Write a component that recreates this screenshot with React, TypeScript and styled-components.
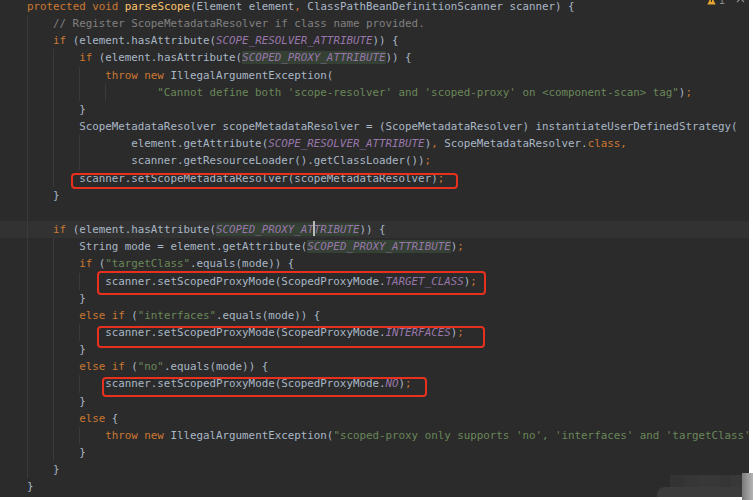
import React from 'react';
import styled, { createGlobalStyle } from 'styled-components';

const LINE_H = 17.17;

const GlobalStyle = createGlobalStyle`
  html, body {
    margin: 0;
    padding: 0;
    background: #ffffff;
  }
`;

const Page = styled.div`
  position: relative;
  width: 753px;
  height: 500px;
  overflow: hidden;
`;

const Editor = styled.div`
  position: relative;
  width: 749px;
  height: 497px;
  background: #2b2b2b;
  overflow: hidden;
  font-family: 'DejaVu Sans Mono', 'Liberation Mono', monospace;
  font-size: 10.83px;
  color: #a9b7c6;
`;

const Code = styled.div`
  margin-top: -2px;
`;

const Line = styled.div<{ $current?: boolean }>`
  display: flex;
  height: ${LINE_H}px;
  line-height: ${LINE_H}px;
  padding-left: 27px;
  white-space: pre;
  background: ${(p) => (p.$current ? '#323232' : 'transparent')};
`;

const Guide = styled.span`
  flex: none;
  width: 4ch;
  background: linear-gradient(#3a3a3a, #3a3a3a) no-repeat 0 0 / 1px 100%;
`;

const Spacer = styled.span<{ $cols: number }>`
  flex: none;
  width: ${(p) => p.$cols}ch;
`;

const Text = styled.span`
  position: relative;
  flex: none;
`;

const colors: Record<string, string> = {
  k: '#cc7832',
  m: '#ffc66d',
  t: '#a9b7c6',
  c: '#808080',
  s: '#6a8759',
  f: '#9876aa',
  g: '#9876aa',
  p: '#cc7832',
};

const Tok = styled.span<{ $kind: string }>`
  color: ${(p) => colors[p.$kind]};
  font-style: ${(p) => (p.$kind === 'f' || p.$kind === 'g' ? 'italic' : 'normal')};
  background: ${(p) => (p.$kind === 'g' ? '#344134' : 'transparent')};
`;

const Caret = styled.span`
  display: inline-block;
  width: 2px;
  height: 15px;
  margin: 0 -1px;
  vertical-align: -3px;
  background: #bbbbbb;
`;

type Box = { l: number; r: number; t: number; b: number };

const Mark = styled.span<{ $box: Box }>`
  position: absolute;
  left: ${(p) => p.$box.l}px;
  right: ${(p) => p.$box.r}px;
  top: ${(p) => p.$box.t}px;
  bottom: ${(p) => p.$box.b}px;
  border: 2px solid #e8301f;
  border-radius: 4px;
  pointer-events: none;
`;

const Inspect = styled.div`
  position: absolute;
  top: -5px;
  right: 4px;
  display: flex;
  align-items: center;
  gap: 3px;
  color: #8c8c8c;
  font-family: 'DejaVu Sans', sans-serif;
  font-size: 10px;
`;

const Watermark = styled.div`
  position: absolute;
  right: 0;
  bottom: 0;
  display: flex;
  align-items: flex-end;
`;

const WaterBand = styled.div`
  width: 85px;
  height: 22px;
  display: flex;
  flex-direction: column;
  margin-bottom: 3px;
`;

const WaterTiles = styled.div`
  flex: 1;
  margin-left: 13px;
  background: linear-gradient(
    90deg,
    #333333 0 20%,
    #363636 20% 40%,
    #383838 40% 70%,
    #353535 70% 85%,
    #383838 85%
  );
`;

const WaterBottom = styled.div`
  height: 10px;
  background: #3b3b3b;
  border-radius: 8px 0 0 0;
`;

const WaterEdge = styled.div`
  width: 11px;
  height: 27px;
  background: linear-gradient(90deg, #7a7a7a, #b4b4b4);
`;

type T = [string, string];
type L = { i: number; g: number; toks?: T[]; cur?: boolean; box?: Box; caret?: boolean };

const lines: L[] = [
  { i: 0, g: 0, toks: [['k', 'protected void '], ['m', 'parseScope'], ['t', '(Element element'], ['p', ', '], ['t', 'ClassPathBeanDefinitionScanner scanner) {']] },
  { i: 4, g: 1, toks: [['c', '// Register ScopeMetadataResolver if class name provided.']] },
  { i: 4, g: 1, toks: [['k', 'if '], ['t', '(element.hasAttribute('], ['f', 'SCOPE_RESOLVER_ATTRIBUTE'], ['t', ')) {']] },
  { i: 8, g: 2, toks: [['k', 'if '], ['t', '(element.hasAttribute('], ['g', 'SCOPED_PROXY_ATTRIBUTE'], ['t', ')) {']] },
  { i: 12, g: 3, toks: [['k', 'throw new '], ['t', 'IllegalArgumentException(']] },
  { i: 20, g: 4, toks: [['s', `"Cannot define both 'scope-resolver' and 'scoped-proxy' on <component-scan> tag"`], ['t', ')'], ['p', ';']] },
  { i: 8, g: 2, toks: [['t', '}']] },
  { i: 8, g: 2, toks: [['t', 'ScopeMetadataResolver scopeMetadataResolver = (ScopeMetadataResolver) instantiateUserDefinedStrategy(']] },
  { i: 16, g: 3, toks: [['t', 'element.getAttribute('], ['f', 'SCOPE_RESOLVER_ATTRIBUTE'], ['t', ')'], ['p', ', '], ['t', 'ScopeMetadataResolver.'], ['k', 'class'], ['p', ',']] },
  { i: 16, g: 3, toks: [['t', 'scanner.getResourceLoader().getClassLoader())'], ['p', ';']] },
  { i: 8, g: 2, toks: [['t', 'scanner.setScopeMetadataResolver(scopeMetadataResolver)'], ['p', ';']], box: { l: -8, r: -13.5, t: 3.3, b: -2.4 } },
  { i: 4, g: 1, toks: [['t', '}']] },
  { i: 4, g: 1 },
  { i: 4, g: 1, cur: true, caret: true, toks: [['k', 'if '], ['t', '(element.hasAttribute('], ['g', 'SCOPED_PROXY_ATTRIBUTE'], ['t', ')) {']] },
  { i: 8, g: 2, toks: [['t', 'String mode = element.getAttribute('], ['g', 'SCOPED_PROXY_ATTRIBUTE'], ['t', ')'], ['p', ';']] },
  { i: 8, g: 2, toks: [['k', 'if '], ['t', '('], ['s', '"targetClass"'], ['t', '.equals(mode)) {']] },
  { i: 12, g: 3, toks: [['t', 'scanner.setScopedProxyMode(ScopedProxyMode.'], ['f', 'TARGET_CLASS'], ['t', ')'], ['p', ';']], box: { l: -8.5, r: -8.8, t: -1.7, b: -5.1 } },
  { i: 8, g: 2, toks: [['t', '}']] },
  { i: 8, g: 2, toks: [['k', 'else if '], ['t', '('], ['s', '"interfaces"'], ['t', '.equals(mode)) {']] },
  { i: 12, g: 3, toks: [['t', 'scanner.setScopedProxyMode(ScopedProxyMode.'], ['f', 'INTERFACES'], ['t', ')'], ['p', ';']], box: { l: -8.5, r: -21.5, t: 1.8, b: -6.9 } },
  { i: 8, g: 2, toks: [['t', '}']] },
  { i: 8, g: 2, toks: [['k', 'else if '], ['t', '('], ['s', '"no"'], ['t', '.equals(mode)) {']] },
  { i: 12, g: 3, toks: [['t', 'scanner.setScopedProxyMode(ScopedProxyMode.'], ['f', 'NO'], ['t', ')'], ['p', ';']], box: { l: -3.5, r: -15, t: 1.6, b: -4.4 } },
  { i: 8, g: 2, toks: [['t', '}']] },
  { i: 8, g: 2, toks: [['k', 'else '], ['t', '{']] },
  { i: 12, g: 3, toks: [['k', 'throw new '], ['t', 'IllegalArgumentException('], ['s', `"scoped-proxy only supports 'no', 'interfaces' and 'targetClass'"`], ['t', ')'], ['p', ';']] },
  { i: 8, g: 2, toks: [['t', '}']] },
  { i: 4, g: 1, toks: [['t', '}']] },
  { i: 0, g: 0, toks: [['t', '}']] },
];

const renderTok = ([kind, text]: T, idx: number, caret?: boolean) => {
  if (caret && kind === 'g') {
    return (
      <Tok key={idx} $kind={kind}>
        {text.slice(0, 15)}
        <Caret />
        {text.slice(15)}
      </Tok>
    );
  }
  return (
    <Tok key={idx} $kind={kind}>
      {text}
    </Tok>
  );
};

const App: React.FC = () => {
  return (
    <Page>
      <GlobalStyle />
      <Editor>
        <Code>
          {lines.map((ln, n) => (
            <Line key={n} $current={ln.cur}>
              {Array.from({ length: ln.g }).map((_, k) => (
                <Guide key={k} />
              ))}
              <Spacer $cols={ln.i - ln.g * 4} />
              <Text>
                {(ln.toks || []).map((t, k) => renderTok(t, k, ln.caret))}
                {ln.box && <Mark $box={ln.box} />}
              </Text>
            </Line>
          ))}
        </Code>
        <Inspect>
          <svg width="9" height="9" viewBox="0 0 9 9">
            <path d="M4.5 0.5 L8.7 8.5 L0.3 8.5 Z" fill="#e5a533" />
            <rect x="4" y="3" width="1" height="3" fill="#2b2b2b" />
          </svg>
          <span>1</span>
          <svg width="9" height="9" viewBox="0 0 9 9" style={{ marginLeft: 8 }}>
            <path d="M1 6 L4.5 2.5 L8 6" fill="none" stroke="#8c8c8c" strokeWidth="1.2" />
          </svg>
        </Inspect>
      </Editor>
      <Watermark>
        <WaterBand>
          <WaterTiles />
          <WaterBottom />
        </WaterBand>
        <WaterEdge />
      </Watermark>
    </Page>
  );
};

export default App;
